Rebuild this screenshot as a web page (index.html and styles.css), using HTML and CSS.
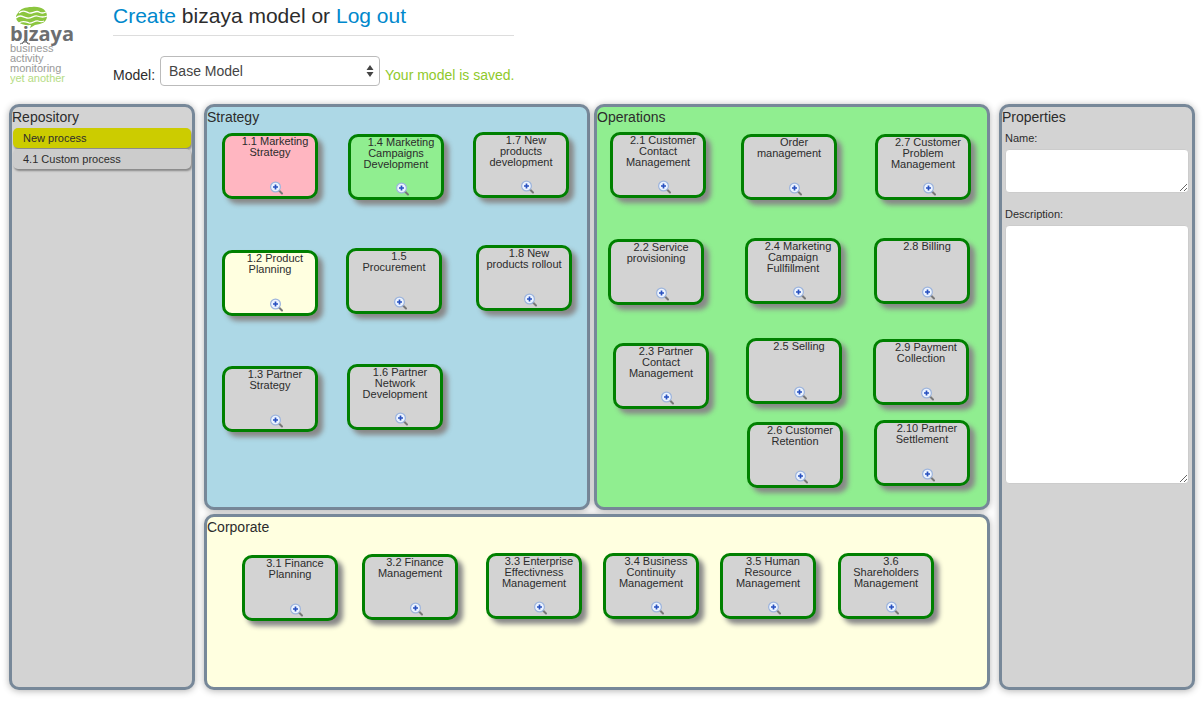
FILE: index.html
```
<!DOCTYPE html>
<html lang="en">
<head>
<meta charset="utf-8">
<title>bizaya</title>
<link rel="stylesheet" href="styles.css">
</head>
<body>
<svg class="defs" aria-hidden="true">
  <symbol id="zoom-in" viewBox="0 0 16 16">
    <path d="M10 10.500l3 3" stroke="#777" stroke-width="2" stroke-linecap="round"/>
    <circle cx="6.500" cy="7" r="4.900" fill="#edf4ff" stroke="#9db4dc" stroke-width="1.200"/>
    <path d="M6.500 4.500v5M4 7h5" stroke="#2850c0" stroke-width="1.700"/>
  </symbol>
</svg>
<header class="header">
  <svg class="logo" viewBox="0 0 70 80" role="img" aria-label="bizaya business activity monitoring yet another">
    <path d="M22 2C31 1 37 5 37 11c0 6-5 8-12 9l-5 3 1-3C12 21 6 17 6 12c0-2 1-3 2-4 2-4 7-6 14-6z" fill="#8cc63f"/>
    <path d="M9 8c4-4 7-1 10 0s7-3 10-1 4 1 7 0M6 13c4-4 7-1 11 0s7-3 10-2 6 2 10 0M9 18c4-3 7-1 10 0s6-3 9-2 4 1 6 0" fill="none" stroke="#fff" stroke-width="1.300"/>
    <text class="logo-name" x="0" y="36">bizaya</text>
    <path d="M15 34v4M15 35c-1 3-3 3-5 4M15 35c1 3 3 3 5 4M14 36l-2 3M16 36l2 3" fill="none" stroke="#6d6e70"/>
    <text class="logo-tag" x="0" y="47">business</text>
    <text class="logo-tag" x="0" y="57">activity</text>
    <text class="logo-tag" x="0" y="67">monitoring</text>
    <text class="logo-tag logo-green" x="0" y="77">yet another</text>
  </svg>
  <div class="controls">
    <h1 class="heading"><a href="#">Create</a> bizaya model or <a href="#">Log out</a></h1>
    <form class="model">
      <label for="model">Model:</label>
      <span class="picker">
        <select id="model"><option>Base Model</option></select>
        <svg class="arrows" viewBox="0 0 8 12" aria-hidden="true"><path d="M4 0l3.500 5h-7zM4 12l3.500-5h-7z" fill="#444"/></svg>
      </span>
      <output class="status" for="model">Your model is saved.</output>
    </form>
  </div>
</header>
<main class="workspace">
  <aside class="panel repository">
    <h2 class="title">Repository</h2>
    <button class="item item-new" type="button">New process</button>
    <button class="item" type="button">4.1 Custom process</button>
  </aside>
  <div class="map">
    <section class="panel strategy">
      <h2 class="title">Strategy</h2>
      <div class="node pink" style="left:15px;top:26px"><p>1.1 Marketing Strategy</p><button type="button" aria-label="Zoom"><svg><use href="#zoom-in"/></svg></button></div>
      <div class="node green" style="left:141px;top:27px"><p>1.4 Marketing Campaigns Development</p><button type="button" aria-label="Zoom"><svg><use href="#zoom-in"/></svg></button></div>
      <div class="node" style="left:266px;top:25px"><p>1.7 New products development</p><button type="button" aria-label="Zoom"><svg><use href="#zoom-in"/></svg></button></div>
      <div class="node yellow" style="left:15px;top:143px"><p>1.2 Product Planning</p><button type="button" aria-label="Zoom"><svg><use href="#zoom-in"/></svg></button></div>
      <div class="node" style="left:139px;top:141px"><p>1.5 Procurement</p><button type="button" aria-label="Zoom"><svg><use href="#zoom-in"/></svg></button></div>
      <div class="node" style="left:269px;top:138px"><p>1.8 New products rollout</p><button type="button" aria-label="Zoom"><svg><use href="#zoom-in"/></svg></button></div>
      <div class="node" style="left:15px;top:259px"><p>1.3 Partner Strategy</p><button type="button" aria-label="Zoom"><svg><use href="#zoom-in"/></svg></button></div>
      <div class="node" style="left:140px;top:257px"><p>1.6 Partner Network Development</p><button type="button" aria-label="Zoom"><svg><use href="#zoom-in"/></svg></button></div>
    </section>
    <section class="panel operations">
      <h2 class="title">Operations</h2>
      <div class="node" style="left:13px;top:25px"><p>2.1 Customer Contact Management</p><button type="button" aria-label="Zoom"><svg><use href="#zoom-in"/></svg></button></div>
      <div class="node" style="left:144px;top:27px"><p>Order management</p><button type="button" aria-label="Zoom"><svg><use href="#zoom-in"/></svg></button></div>
      <div class="node" style="left:278px;top:27px"><p>2.7 Customer Problem Management</p><button type="button" aria-label="Zoom"><svg><use href="#zoom-in"/></svg></button></div>
      <div class="node" style="left:11px;top:132px"><p>2.2 Service provisioning</p><button type="button" aria-label="Zoom"><svg><use href="#zoom-in"/></svg></button></div>
      <div class="node" style="left:148px;top:131px"><p>2.4 Marketing Campaign Fullfillment</p><button type="button" aria-label="Zoom"><svg><use href="#zoom-in"/></svg></button></div>
      <div class="node" style="left:277px;top:131px"><p>2.8 Billing</p><button type="button" aria-label="Zoom"><svg><use href="#zoom-in"/></svg></button></div>
      <div class="node" style="left:16px;top:236px"><p>2.3 Partner Contact Management</p><button type="button" aria-label="Zoom"><svg><use href="#zoom-in"/></svg></button></div>
      <div class="node" style="left:149px;top:231px"><p>2.5 Selling</p><button type="button" aria-label="Zoom"><svg><use href="#zoom-in"/></svg></button></div>
      <div class="node" style="left:276px;top:232px"><p>2.9 Payment Collection</p><button type="button" aria-label="Zoom"><svg><use href="#zoom-in"/></svg></button></div>
      <div class="node" style="left:150px;top:315px"><p>2.6 Customer Retention</p><button type="button" aria-label="Zoom"><svg><use href="#zoom-in"/></svg></button></div>
      <div class="node" style="left:277px;top:313px"><p>2.10 Partner Settlement</p><button type="button" aria-label="Zoom"><svg><use href="#zoom-in"/></svg></button></div>
    </section>
    <section class="panel corporate">
      <h2 class="title">Corporate</h2>
      <div class="node" style="left:35px;top:38px"><p>3.1 Finance Planning</p><button type="button" aria-label="Zoom"><svg><use href="#zoom-in"/></svg></button></div>
      <div class="node" style="left:155px;top:37px"><p>3.2 Finance Management</p><button type="button" aria-label="Zoom"><svg><use href="#zoom-in"/></svg></button></div>
      <div class="node" style="left:279px;top:36px"><p>3.3 Enterprise Effectivness Management</p><button type="button" aria-label="Zoom"><svg><use href="#zoom-in"/></svg></button></div>
      <div class="node" style="left:396px;top:36px"><p>3.4 Business Continuity Management</p><button type="button" aria-label="Zoom"><svg><use href="#zoom-in"/></svg></button></div>
      <div class="node" style="left:513px;top:36px"><p>3.5 Human Resource Management</p><button type="button" aria-label="Zoom"><svg><use href="#zoom-in"/></svg></button></div>
      <div class="node" style="left:631px;top:36px"><p>3.6 Shareholders Management</p><button type="button" aria-label="Zoom"><svg><use href="#zoom-in"/></svg></button></div>
    </section>
  </div>
  <aside class="panel properties">
    <h2 class="title">Properties</h2>
    <div class="fields">
      <div class="field">
        <label for="name">Name:</label>
        <textarea id="name" class="short"></textarea>
      </div>
      <div class="field">
        <label for="description">Description:</label>
        <textarea id="description" class="tall"></textarea>
      </div>
    </div>
  </aside>
</main>
</body>
</html>
```
FILE: styles.css
```
* { box-sizing: border-box; }

body {
  margin: 0;
  background: #fff;
  color: #2c2c2c;
  font: 14px/20px "Liberation Sans", Arial, sans-serif;
}

h1, h2, p { margin: 0; font-weight: 400; }

.defs { position: absolute; width: 0; height: 0; }

.header {
  display: flex;
  gap: 33px;
  padding: 5px 10px 18px;
}

.logo { width: 70px; height: 80px; }
.logo-name { font: 700 20px "Open Sans", sans-serif; fill: #6d6e70; }
.logo-tag { font: 11px "Liberation Sans", Arial, sans-serif; fill: #999; }
.logo-green { fill: #b4dc82; }

.heading {
  padding-bottom: 9px;
  border-bottom: 1px solid #ddd;
  font-size: 21px;
  line-height: 21px;
}

.heading a { color: #08c; text-decoration: none; }

.model {
  display: flex;
  align-items: center;
  gap: 5px;
  margin-top: 20px;
}

.model label, .status { padding-top: 8px; }
.status { color: #8fc92b; }

.picker { display: grid; align-items: center; }

.picker select, .arrows { grid-area: 1 / 1; }

.picker select {
  width: 220px;
  height: 30px;
  padding: 0 8px;
  appearance: none;
  border: 1px solid #bbb;
  border-radius: 4px;
  background: #fff;
  color: #444;
  font: inherit;
}

.arrows {
  justify-self: end;
  width: 8px;
  height: 12px;
  margin-right: 6px;
  pointer-events: none;
}

.workspace {
  display: grid;
  grid-template-columns: 186px 1fr 196px;
  gap: 9px;
  padding: 0 9px 11px;
}

.map {
  display: grid;
  grid-template-columns: 386fr 396fr;
  grid-template-rows: minmax(406px, auto) minmax(176px, auto);
  gap: 4px;
}

.panel {
  position: relative;
  border: 3px solid #789;
  border-radius: 10px;
  background: #d3d3d3;
  box-shadow: 0 1px 7px rgba(0, 0, 0, 0.3);
}

.title { font-size: 14px; line-height: 20px; }

.strategy { background: #add8e6; }
.operations { background: #90ee90; }
.corporate { grid-column: 1 / -1; background: #ffffe0; }

.repository, .properties { display: flex; flex-direction: column; gap: 1px; }
.repository .item { margin: 0 1px; }

.item {
  height: 20px;
  padding: 0 10px;
  border: 0;
  border-radius: 5px;
  background: #ccc;
  box-shadow: 1px 2px 2px #888;
  color: #2c2c2c;
  font: 11px/20px "Liberation Sans", Arial, sans-serif;
  text-align: left;
}

.item-new { background: #cc0; }

.node {
  position: absolute;
  display: flex;
  flex-direction: column;
  justify-content: space-between;
  width: 96px;
  height: 66px;
  border: 3px solid #008000;
  border-radius: 10px;
  background: #d3d3d3;
  box-shadow: 5px 5px 5px #888;
  font-size: 11px;
  line-height: 11px;
  text-align: center;
  text-indent: 10px;
}

.pink { background: #ffb6c1; }
.green { background: #90ee90; }
.yellow { background: #ffffe0; }

.node button {
  width: 16px;
  height: 16px;
  margin-left: 44px;
  padding: 0;
  border: 0;
  background: none;
  text-indent: 0;
}

.node svg { display: block; width: 16px; height: 16px; }

.fields {
  display: flex;
  flex-direction: column;
  gap: 11px;
  padding: 0 3px;
}

.field {
  display: flex;
  flex-direction: column;
  gap: 1px;
  font-size: 11px;
}

textarea {
  width: 100%;
  border: 1px solid #ccc;
  border-radius: 4px;
  background: #fff;
  font: inherit;
}

.short { height: 44px; }
.tall { height: 259px; }
```
